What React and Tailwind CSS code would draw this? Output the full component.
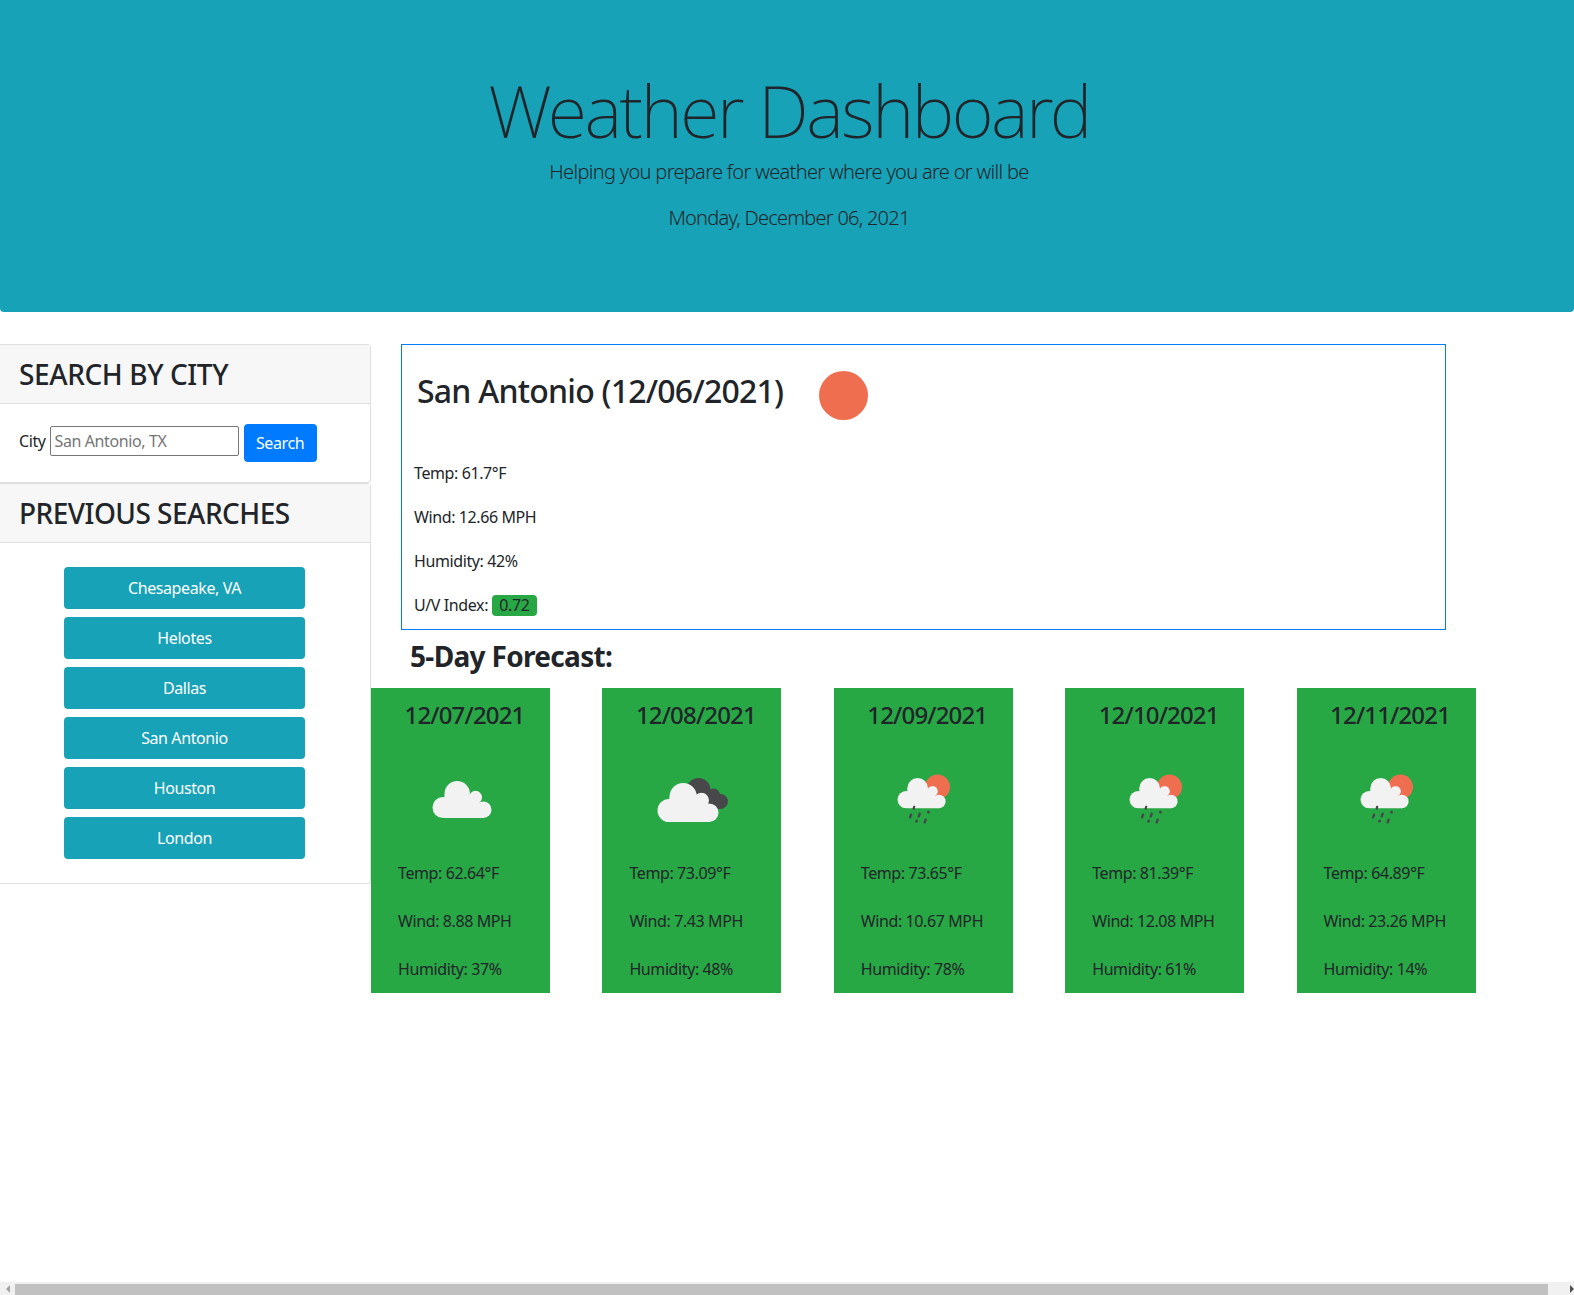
const F = "font-['Noto_Sans','Open_Sans',sans-serif]";

function CloudShape({ fill, stroke, strokeWidth }) {
  const p = { fill, stroke, strokeWidth };
  return (
    <g {...p}>
      <circle cx="10.5" cy="26.5" r="10.5" />
      <circle cx="24.7" cy="12.7" r="12.7" />
      <circle cx="43" cy="16.3" r="6.5" />
      <circle cx="50.7" cy="28.7" r="8.3" />
      <path d="M12 37V14H37L46 16V22H50.7V37Z" />
    </g>
  );
}

function Cloud({ x, y, scale = 1, halo }) {
  return (
    <g transform={`translate(${x} ${y}) scale(${scale})`}>
      {halo && <CloudShape fill={halo} stroke={halo} strokeWidth="2" />}
      <CloudShape fill="#f2f2f2" />
    </g>
  );
}

function Icon({ type }) {
  return (
    <svg viewBox="0 0 100 100" className="block w-[100px] h-[100px] mx-auto">
      {type === "cloud" && <Cloud x={21.5} y={31} />}
      {type === "dark" && (
        <>
          <g fill="#48484a">
            <circle cx="56.5" cy="40" r="12" />
            <circle cx="71.5" cy="45" r="6.5" />
            <circle cx="78.5" cy="51.5" r="7.5" />
            <rect x="58" y="46" width="20" height="13" />
          </g>
          <Cloud x={16.5} y={34} halo="#f2f2f2" />
        </>
      )}
      {type === "rain" && (
        <>
          <circle cx="64.5" cy="37" r="12.5" fill="#ee6e4f" />
          <Cloud x={24.5} y={28} scale={0.815} />
          <g fill="#48484a">
            <rect x="39.8" y="55.7" width="2.2" height="4" rx="0.8" transform="rotate(15 40.8 57.7)" />
            <rect x="36.4" y="63.5" width="2.4" height="5" rx="0.8" transform="rotate(20 37.5 66)" />
            <rect x="45" y="62.5" width="2.4" height="5" rx="0.8" transform="rotate(20 46.2 65)" />
            <circle cx="55.5" cy="62" r="1.5" />
            <circle cx="43.5" cy="71" r="1.5" />
            <rect x="51" y="68.5" width="2.4" height="5" rx="0.8" transform="rotate(20 52.2 71)" />
          </g>
        </>
      )}
    </svg>
  );
}

const days = [
  ["12/07/2021", "cloud", "62.64", "8.88", "37"],
  ["12/08/2021", "dark", "73.09", "7.43", "48"],
  ["12/09/2021", "rain", "73.65", "10.67", "78"],
  ["12/10/2021", "rain", "81.39", "12.08", "61"],
  ["12/11/2021", "rain", "64.89", "23.26", "14"],
];
const prev = ["Chesapeake, VA", "Helotes", "Dallas", "San Antonio", "Houston", "London"];

export default function App() {
  return (
    <div className={`${F} h-[1295px] w-[1574px] overflow-hidden flex flex-col bg-white text-[#212529] text-[16px] leading-[24px] tracking-[-0.025em]`}>
      <header className="h-[312px] shrink-0 bg-[#17a2b8] rounded-b-[4px] flex flex-col items-center pt-[67px] pl-[4px]">
        <h1 className="text-[72px] leading-[86px] font-extralight tracking-[-0.034em]">Weather Dashboard</h1>
        <p className="text-[20px] leading-[30px] font-light mt-[4px] tracking-[-0.034em]">Helping you prepare for weather where you are or will be</p>
        <p className="text-[20px] leading-[30px] font-light mt-[16px] tracking-[-0.038em]">Monday, December 06, 2021</p>
      </header>

      <main className="flex-1 flex pt-[32px]">
        <aside className="w-[371px] shrink-0">
          <section className="h-[139px] border border-l-0 border-[#dfdfdf] rounded-r-[4px]">
            <h3 className="h-[59px] bg-[#f7f7f7] border-b border-[#dfdfdf] pl-[19px] text-[28px] leading-[59px] font-medium">SEARCH BY CITY</h3>
            <div className="flex items-start pl-[19px] pt-[20px]">
              <label className="mt-[5px]">City</label>
              <input
                readOnly
                placeholder="San Antonio, TX"
                className="ml-[4px] mt-[2px] w-[189px] h-[30px] border border-[#767676] rounded-[2px] px-[4px] placeholder:text-[#757575]"
              />
              <button className="ml-[5px] w-[73px] h-[38px] bg-[#007bff] text-white rounded-[4px]">Search</button>
            </div>
          </section>
          <section className="h-[401px] border border-l-0 border-[#dfdfdf] rounded-r-[4px]">
            <h3 className="h-[59px] bg-[#f7f7f7] border-b border-[#dfdfdf] pl-[19px] text-[28px] leading-[59px] font-medium tracking-[-0.0186em]">PREVIOUS SEARCHES</h3>
            <div className="flex flex-col items-center gap-[8px] pt-[24px] pr-[1px]">
              {prev.map((c) => (
                <button key={c} className="w-[241px] h-[42px] bg-[#17a2b8] text-white rounded-[4px]">{c}</button>
              ))}
            </div>
          </section>
        </aside>

        <div className="flex-1">
          <section className="ml-[30px] w-[1045px] h-[286px] border border-[#007bff] pl-[12px]">
            <div className="flex h-[116px]">
              <h2 className="ml-[3px] mt-[27px] text-[32px] leading-[38px] font-medium tracking-[-0.024em]">San Antonio (12/06/2021)</h2>
              <div className="ml-[36px] mt-[26px] w-[49px] h-[49px] rounded-full bg-[#ee6e4f]" />
            </div>
            <div className="flex flex-col gap-[20px]">
              <p>Temp: 61.7°F</p>
              <p>Wind: 12.66 MPH</p>
              <p>Humidity: 42%</p>
              <p>
                U/V Index: <span className="inline-block h-[21px] leading-[21px] px-[7.5px] bg-[#28a745] rounded-[4px]">0.72</span>
              </p>
            </div>
          </section>
          <h3 className="ml-[39px] mt-[9px] h-[49px] text-[28px] leading-[34px] font-bold tracking-[-0.024em]">5-Day Forecast:</h3>
          <div className="flex gap-[52.4px]">
            {days.map(([d, t, temp, wind, hum]) => (
              <article key={d} className="w-[179px] h-[305px] bg-[#28a745] pt-[12px]">
                <h5 className="text-[24px] leading-[29px] font-medium text-center pl-[8px] h-[50px] tracking-[-0.035em]">{d}</h5>
                <Icon type={t} />
                <div className="mt-[11px] pl-[27px] flex flex-col gap-[24px]">
                  <p>Temp: {temp}°F</p>
                  <p>Wind: {wind} MPH</p>
                  <p>Humidity: {hum}%</p>
                </div>
              </article>
            ))}
          </div>
        </div>
      </main>

      <div className="h-[13px] shrink-0 bg-[#f1f1f1] flex items-end">
        <div className="w-[15px] h-full flex items-center justify-center">
          <div className="border-y-[4px] border-y-transparent border-r-[4px] border-r-[#a3a3a3]" />
        </div>
        <div className="w-[1533px] h-[11px] bg-[#c1c1c1]" />
        <div className="flex-1 h-full flex items-center justify-end">
          <div className="border-y-[4px] border-y-transparent border-l-[4px] border-l-[#505050]" />
        </div>
      </div>
    </div>
  );
}
